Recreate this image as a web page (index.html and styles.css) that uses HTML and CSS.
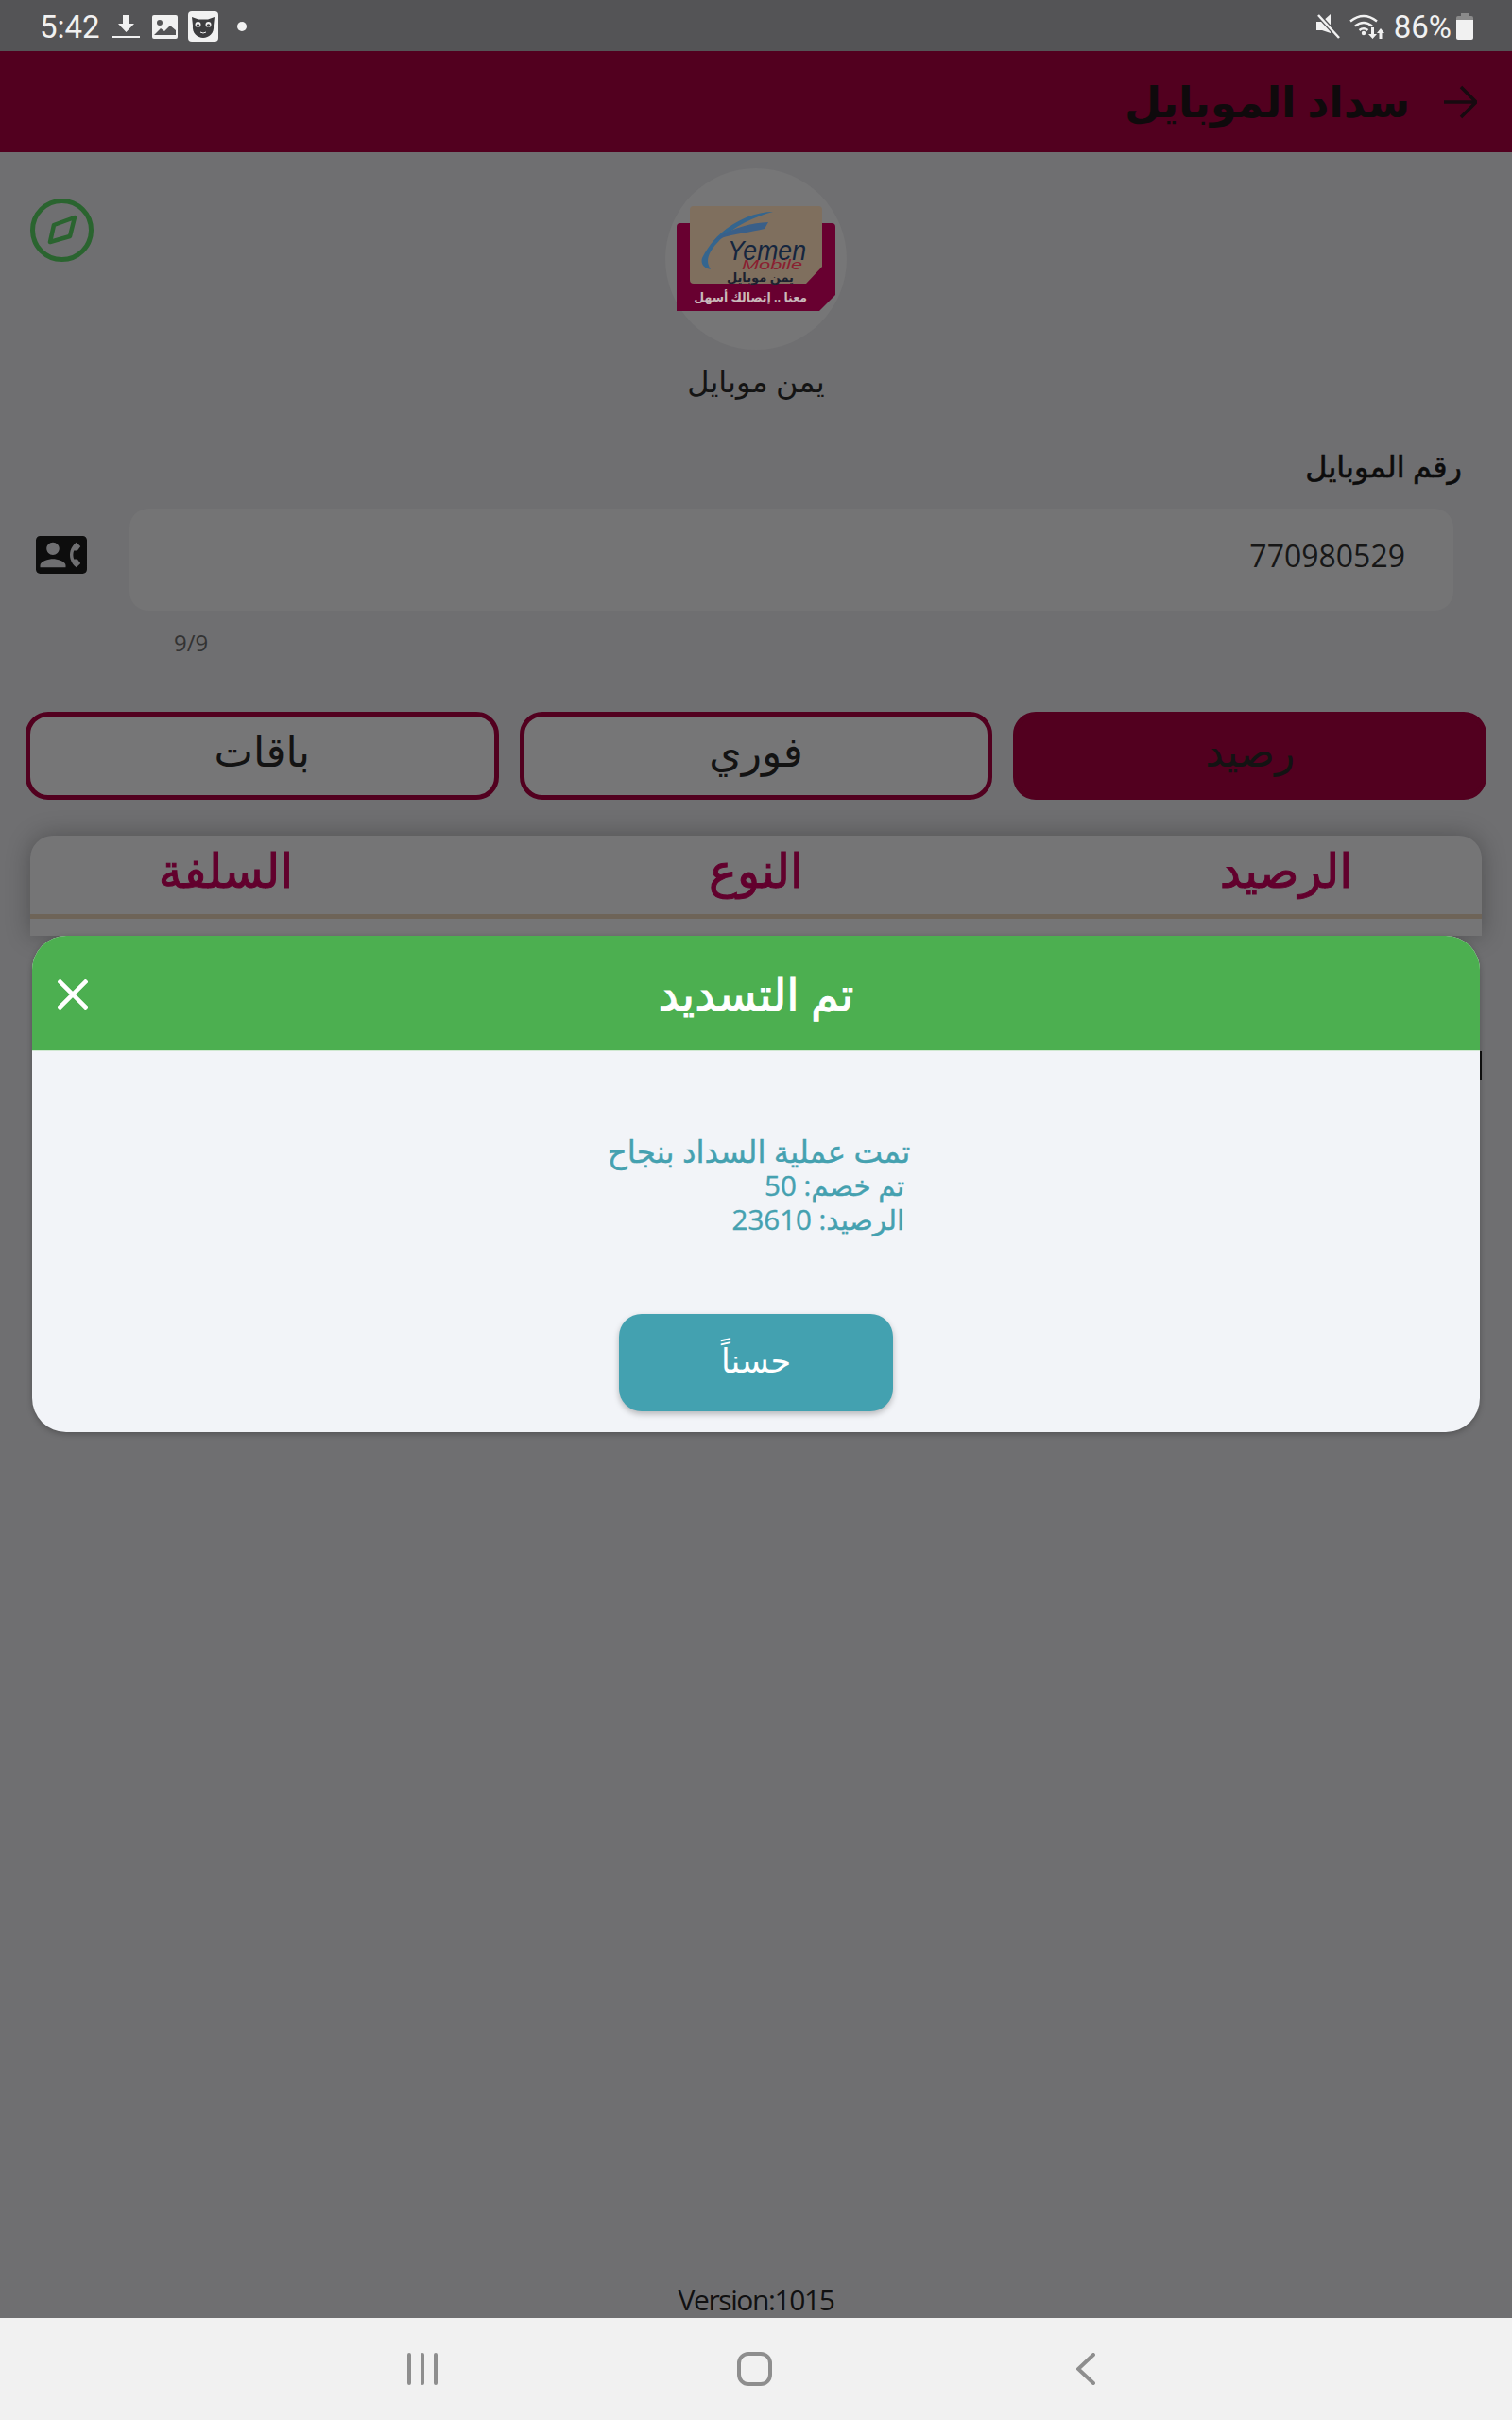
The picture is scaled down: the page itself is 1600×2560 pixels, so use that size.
FILE: index.html
```html
<!DOCTYPE html>
<html lang="ar">
<head>
    <meta charset="UTF-8">
    <meta name="viewport" content="width=device-width, initial-scale=1.0">
    <title>سداد الموبايل</title>
    <link rel="stylesheet" href="styles.css">
</head>
<body>
<div class="screen">
    <div class="statusBar">
        <div class="statusLeft">
            <span class="clock">5:42</span>
            <svg class="icoDownload" width="29" height="24" viewBox="0 0 29 24"><path d="M11 0h7v9h5l-8.500 9-8.500-9h5z" fill="#f1f1f1"/><rect y="22" width="29" height="2" fill="#f1f1f1"/></svg>
            <svg class="icoImage" width="27" height="25" viewBox="0 0 27 25"><rect width="27" height="25" rx="2" fill="#f1f1f1"/><circle cx="8" cy="8" r="3" fill="#545456"/><path d="M2 21l7-7 4 3 6-6 6 5v5H2z" fill="#545456"/></svg>
            <svg class="icoCat" width="32" height="32" viewBox="0 0 32 32"><rect width="32" height="32" rx="4" fill="#f1f1f1"/><path d="M4 6l7 2.500h10l7-2.500-1 9c1 8-5 13-11 13S4 23 5 15z" fill="#3c3c3e"/><circle cx="10.500" cy="14" r="3" fill="#f1f1f1"/><circle cx="21.500" cy="14" r="3" fill="#f1f1f1"/><circle cx="10.500" cy="15" r="1.800" fill="#3c3c3e"/><circle cx="21.500" cy="15" r="1.800" fill="#3c3c3e"/><path d="M13 22q3 2 6 0" stroke="#f1f1f1" stroke-width="1" fill="none"/></svg>
            <span class="notifDot"></span>
        </div>
        <div class="statusRight">
            <svg width="26" height="28" viewBox="0 0 26 28"><path d="M0 9h6l9-8v20L6 18H0z" fill="#f1f1f1"/><path d="M3 3l22 24" stroke="#545456" stroke-width="5"/><path d="M2 2l22 24" stroke="#f1f1f1" stroke-width="2.500"/></svg>
            <svg class="icoWifi" width="37" height="28" viewBox="0 0 37 28"><g fill="none" stroke="#f1f1f1" stroke-width="2.400"><path d="M1 8.500q14-11 28 0"/><path d="M6 13.500q9-7 18 0"/><path d="M10.500 18q4.500-3.500 9 0"/></g><circle cx="15" cy="21" r="2.200" fill="#f1f1f1"/><path d="M23 15h3v7h3l-4.500 5-4.500-5h3zM33 16l4 5h-2.500v6h-3v-6H29z" fill="#f1f1f1"/></svg>
            <span class="batteryText">86%</span>
            <div class="battery"><div class="batteryCap"></div><div class="batteryLevel"></div></div>
        </div>
    </div>

    <div class="topBar">
        <svg class="backArrow" width="36" height="36" viewBox="0 0 36 36"><path d="M1 18h33M19 2l16 16-16 16" fill="none" stroke="#170a10" stroke-width="3.400"/></svg>
        <div class="topTitle">سداد الموبايل</div>
    </div>

    <div class="content">
        <div class="brandRow">
            <svg class="compass" width="67" height="67" viewBox="0 0 67 67"><circle cx="33.500" cy="33.500" r="31" fill="none" stroke="#2a642f" stroke-width="5"/><path d="M47 20L25 28 21 46l21-6z" fill="none" stroke="#2a642f" stroke-width="4.500" stroke-linejoin="round"/></svg>
            <div class="brand">
                <svg class="logo" width="192" height="192" viewBox="0 0 192 192">
                    <circle cx="96" cy="96" r="96" fill="#767677"/>
                    <path d="M16 58h160q4 0 4 4v72l-17 17H12V62q0-4 4-4z" fill="#680030"/>
                    <path d="M30 40h132q4 0 4 4v60l-17 18H30q-4 0-4-4V44q0-4 4-4z" fill="#7f6f5e"/>
                    <path d="M114 46C90 46 55 62 39 95c-2 7 3 11 9 12-4-7-4-11 0-19C60 68 90 52 114 46z" fill="#34658e"/>
                    <path d="M109 57C90 58 66 64 51 77c15-7 39-9 54-13z" fill="#3a5f88"/>
                    <text x="66" y="97" textLength="83" lengthAdjust="spacingAndGlyphs" class="logoYemen">Yemen</text>
                    <text x="81" y="107" textLength="64" lengthAdjust="spacingAndGlyphs" class="logoMobile">Mobile</text>
                    <text x="136" y="120" class="logoAr">يمن موبايل</text>
                    <text x="150" y="141" class="logoSlogan">معنا .. إتصالك أسهل</text>
                </svg>
                <div class="brandName">يمن موبايل</div>
            </div>
        </div>

        <div class="fieldLabel">رقم الموبايل</div>
        <div class="fieldRow">
            <svg class="contactIcon" width="54" height="40" viewBox="0 3 24 18" preserveAspectRatio="none"><path d="M22 3H2C.9 3 0 3.900 0 5v14c0 1.100.9 2 2 2h20c1.100 0 1.990-.9 1.990-2L24 5c0-1.100-.9-2-2-2zM8 6c1.660 0 3 1.340 3 3s-1.340 3-3 3-3-1.340-3-3 1.340-3 3-3zm6 12H2v-1c0-2 4-3.100 6-3.100s6 1.100 6 3.100v1zm3.850-4h1.640L21 16l-1.990 1.990c-1.310-.98-2.280-2.380-2.730-3.990-.18-.64-.28-1.310-.28-2s.1-1.360.28-2c.45-1.620 1.420-3.010 2.730-3.990L21 8l-1.510 2h-1.640c-.22.63-.35 1.300-.35 2s.13 1.370.35 2z" fill="#0d0d0d"/></svg>
            <div class="phoneInput">770980529</div>
        </div>
        <div class="counter">9/9</div>

        <div class="tabs">
            <div class="tab tabActive">رصيد</div>
            <div class="tab">فوري</div>
            <div class="tab">باقات</div>
        </div>

        <div class="offerCard">
            <div class="offerHead">
                <span>الرصيد</span>
                <span>النوع</span>
                <span>السلفة</span>
            </div>
        </div>

        <div class="version">Version:1015</div>
    </div>

    <div class="navBar">
        <svg width="32" height="34" viewBox="0 0 32 34"><g stroke="#8e8e8e" stroke-width="4" stroke-linecap="round"><path d="M2 2v30M16 2v30M30 2v30"/></g></svg>
        <svg width="37" height="36" viewBox="0 0 37 36"><rect x="2" y="2" width="33" height="32" rx="10" fill="none" stroke="#8e8e8e" stroke-width="4"/></svg>
        <svg width="20" height="34" viewBox="0 0 20 34"><path d="M18 2L2 17l16 15" fill="none" stroke="#8e8e8e" stroke-width="4" stroke-linecap="round"/></svg>
    </div>

    <div class="edgeMark"></div>

    <div class="dialog">
        <div class="dialogHead">
            <svg class="dialogClose" width="32" height="32" viewBox="0 0 32 32"><path d="M1 1l30 30M31 1L1 31" stroke="#fff" stroke-width="4.500"/></svg>
            <div class="dialogTitle">تم التسديد</div>
        </div>
        <div class="dialogBody">
            <div class="dialogText">
                <div class="leadLine">تمت عملية السداد بنجاح</div>
                <div class="indent">تم خصم: 50</div>
                <div class="indent">الرصيد: 23610</div>
            </div>
            <div class="okButton">حسناً</div>
        </div>
    </div>
</div>
</body>
</html>
```

FILE: styles.css
```css
* {
    box-sizing: border-box;
}
body {
    margin: 0;
    background-color: #6f6f71;
    font-family: "Open Sans", "DejaVu Sans", sans-serif;
}
.screen {
    position: relative;
    width: 1600px;
    height: 2560px;
    display: flex;
    flex-direction: column;
    overflow: hidden;
}

/* status bar */
.statusBar {
    height: 54px;
    flex: none;
    background-color: #545456;
    display: flex;
    justify-content: space-between;
    align-items: center;
    padding: 2px 41px 0 42px;
    color: #f1f1f1;
}
.statusLeft, .statusRight {
    display: flex;
    align-items: center;
}
.clock {
    font-family: Roboto, sans-serif;
    font-size: 33px;
    margin-right: 13px;
}
.icoDownload {
    margin-right: 13px;
}
.icoImage {
    margin-right: 11px;
}
.notifDot {
    width: 10px;
    height: 10px;
    border-radius: 50%;
    background-color: #f1f1f1;
    margin-left: 20px;
}
.icoWifi {
    margin-left: 9px;
}
.batteryText {
    font-family: Roboto, sans-serif;
    font-size: 33px;
    margin-left: 10px;
    margin-right: 5px;
}
.battery {
    width: 18px;
    height: 28px;
    display: flex;
    flex-direction: column;
    align-items: center;
}
.batteryCap {
    width: 8px;
    height: 3px;
    background-color: #8a8a8a;
}
.batteryLevel {
    flex: 1;
    width: 100%;
    border-radius: 2px;
    background: linear-gradient(#8a8a8a 0, #8a8a8a 4px, #f1f1f1 4px);
}

/* header */
.topBar {
    height: 107px;
    flex: none;
    background-color: #52001f;
    display: flex;
    flex-direction: row-reverse;
    align-items: center;
    padding: 0 37px 0 0;
}
.topTitle {
    font-size: 45px;
    font-weight: 700;
    color: #0f0a0c;
    margin-right: 35px;
    padding-bottom: 2px;
}

/* content */
.content {
    flex: 1;
    display: flex;
    flex-direction: column;
    min-height: 0;
}
.brandRow {
    display: grid;
    grid-template-columns: 1fr auto 1fr;
    padding: 17px 0 0 32px;
}
.compass {
    margin-top: 32px;
}
.brand {
    display: flex;
    flex-direction: column;
    align-items: center;
    margin-left: -32px;
}
.logo {
    display: block;
}
.logoYemen {
    font-family: "Liberation Sans", sans-serif;
    font-style: italic;
    font-size: 30px;
    fill: #16263f;
}
.logoMobile {
    font-family: "Liberation Sans", sans-serif;
    font-style: italic;
    font-size: 14px;
    fill: #8a2030;
}
.logoAr {
    font-size: 13px;
    font-weight: 700;
    fill: #1c2230;
    text-anchor: end;
}
.logoSlogan {
    font-size: 12.500px;
    font-weight: 700;
    fill: #c9b9bb;
    text-anchor: end;
}
.brandName {
    font-size: 32px;
    color: #141414;
    line-height: 44px;
    margin-top: 11px;
}
.fieldLabel {
    font-size: 32px;
    -webkit-text-stroke: 0.6px #0c0c0c;
    color: #0c0c0c;
    text-align: right;
    line-height: 40px;
    padding-right: 53px;
    margin-top: 48px;
    margin-bottom: 2px;
}
.fieldRow {
    display: flex;
    align-items: center;
    margin-top: 23px;
    padding-left: 38px;
}
.contactIcon {
    flex: none;
    margin-right: 45px;
    margin-top: -10px;
}
.phoneInput {
    width: 1401px;
    height: 108px;
    background-color: #747475;
    border-radius: 20px;
    text-align: right;
    padding-right: 51px;
    line-height: 100px;
    font-size: 32px;
    color: #171717;
}
.counter {
    font-size: 24px;
    color: #333;
    line-height: 34px;
    padding-left: 184px;
    margin-top: 17px;
}
.tabs {
    display: flex;
    flex-direction: row-reverse;
    gap: 22px;
    padding: 0 27px;
    margin-top: 56px;
}
.tab {
    flex: 1;
    height: 93px;
    border: 5px solid #52001f;
    border-radius: 24px;
    background-color: #767677;
    text-align: center;
    line-height: 72px;
    font-size: 44px;
    color: #131313;
}
.tabActive {
    background-color: #52001f;
}
.offerCard {
    margin: 38px 32px 0;
    height: 106px;
    background-color: #757576;
    border-radius: 24px 24px 0 0;
    box-shadow: 0 0 26px rgba(0, 0, 0, 0.28);
}
.offerHead {
    height: 88px;
    border-bottom: 5px solid #6e6458;
    display: grid;
    grid-template-columns: 400px 400px 400px;
    gap: 161px;
    padding: 0 7px;
    direction: rtl;
    text-align: center;
    line-height: 72px;
    font-size: 50px;
    -webkit-text-stroke: 1px #62002d;
    color: #62002d;
}
.version {
    margin-top: auto;
    text-align: center;
    font-size: 30px;
    line-height: 40px;
    letter-spacing: -1.400px;
    color: #111;
    margin-bottom: -1px;
}
.navBar {
    height: 108px;
    flex: none;
    background-color: #f1f1f1;
    display: flex;
    align-items: center;
    padding-left: 431px;
    gap: 317px;
}
.navBar svg:last-child {
    margin-left: 5px;
}

/* dialog over the page */
.edgeMark {
    position: absolute;
    left: 1566px;
    top: 1112px;
    width: 2px;
    height: 30px;
    background-color: #111;
}
.dialog {
    position: absolute;
    left: 34px;
    top: 990px;
    width: 1532px;
    height: 525px;
    border-radius: 36px;
    overflow: hidden;
    background-color: #f2f4f8;
    box-shadow: 0 2px 6px rgba(0, 0, 0, 0.25);
    display: flex;
    flex-direction: column;
}
.dialogHead {
    height: 122px;
    flex: none;
    background-color: #4caf50;
    border-bottom: 1px solid #cfe8d0;
    display: flex;
    align-items: center;
    justify-content: center;
    position: relative;
}
.dialogClose {
    position: absolute;
    left: 27px;
    top: 46px;
}
.dialogTitle {
    font-size: 48px;
    -webkit-text-stroke: 1px #fff;
    color: #fff;
}
.dialogBody {
    flex: 1;
    display: flex;
    flex-direction: column;
    align-items: center;
}
.dialogText {
    direction: rtl;
    margin-top: 88px;
    font-size: 29.500px;
    line-height: 36px;
    color: #45a1b0;
    -webkit-text-stroke: 0.4px #45a1b0;
    margin-left: 6px;
}
.leadLine {
    font-size: 32.500px;
}
.indent {
    padding-right: 6px;
}
.okButton {
    width: 290px;
    height: 103px;
    margin-top: 82px;
    background-color: #43a1b0;
    border-radius: 24px;
    box-shadow: 0 3px 6px rgba(0, 0, 0, 0.25);
    color: #fff;
    font-size: 35px;
    text-align: center;
    line-height: 98px;
}
```
